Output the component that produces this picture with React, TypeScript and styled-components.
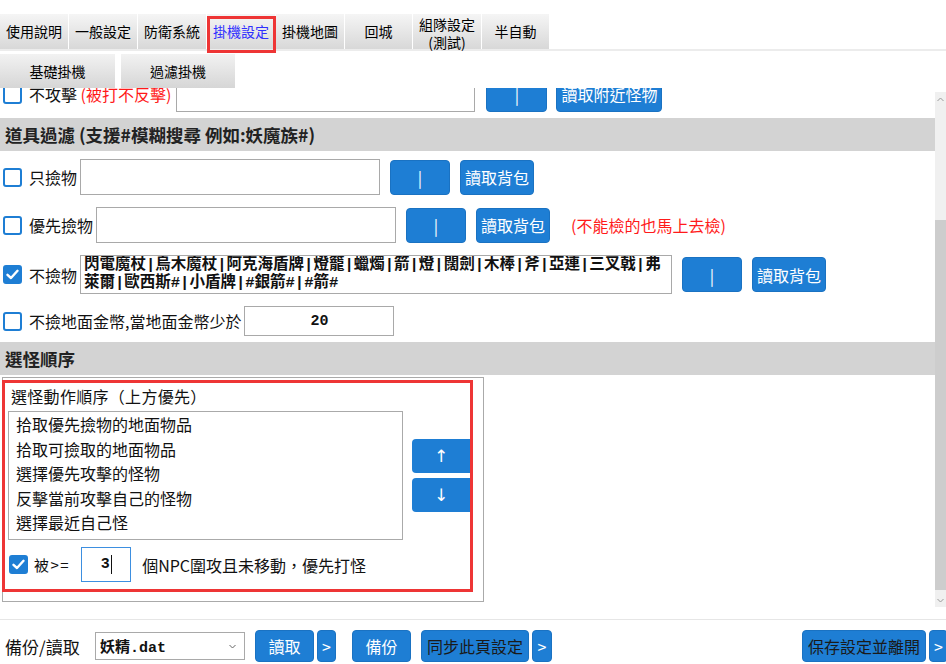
import React from "react";
import styled, { createGlobalStyle, css } from "styled-components";

const BLUE = "#1e7ed4";
const CJK = `"Noto Sans CJK TC", "Noto Sans", sans-serif`;
const MONO = `"Liberation Mono", "Noto Sans CJK TC", monospace`;

const GlobalStyle = createGlobalStyle`
    html, body {
        margin: 0;
        padding: 0;
        background: #fff;
    }
    body {
        font-family: ${CJK};
        color: #111;
    }
    * {
        box-sizing: border-box;
    }
`;

const Page = styled.div`
    width: 946px;
    height: 664px;
    overflow: hidden;
    display: flex;
    flex-direction: column;
`;

/* ---------- top tabs ---------- */

const TabBar = styled.div`
    display: flex;
    gap: 1px;
    margin-top: 14px;
    height: 37px;
    border-bottom: 2px solid #ececec;
`;

const Tab = styled.div<{ $active?: boolean; $twoLine?: boolean }>`
    position: relative;
    height: 35px;
    min-width: 67px;
    padding: ${(p) => (p.$twoLine ? "3px 6px 0" : "0 6px")};
    display: flex;
    align-items: center;
    justify-content: center;
    text-align: center;
    font-size: 14px;
    line-height: ${(p) => (p.$twoLine ? "18px" : "15px")};
    color: ${(p) => (p.$active ? "#2f2fff" : "#000")};
    background: linear-gradient(#f5f5f5, #d8d8d8);
    white-space: nowrap;
    ${(p) =>
        p.$active &&
        css`
            &::after {
                content: "";
                position: absolute;
                left: 0;
                right: -1px;
                top: 2px;
                bottom: -4px;
                border: 3px solid #ee3535;
            }
        `}
`;

const SubTabBar = styled.div`
    display: flex;
    gap: 6px;
    margin-top: 3px;
    height: 34px;
`;

const SubTab = styled.div<{ $w: number }>`
    width: ${(p) => p.$w}px;
    display: flex;
    align-items: center;
    justify-content: center;
    font-size: 14px;
    color: #000;
    background: linear-gradient(#f2f2f2, #d6d6d6);
`;

/* ---------- scrolling body ---------- */

const Body = styled.div`
    display: flex;
    height: 520px;
`;

const Viewport = styled.div`
    flex: 1;
    overflow: hidden;
`;

const Content = styled.div<{ $scroll: number }>`
    margin-top: ${(p) => -p.$scroll}px;
`;

const Scrollbar = styled.div`
    width: 11px;
    margin: 4px 0 1px;
    background: #f0f0f0;
    display: flex;
    flex-direction: column;
`;

const ScrollArrow = styled.div`
    height: 14px;
    display: flex;
    align-items: center;
    justify-content: center;
    flex: none;
`;

const ScrollTrack = styled.div`
    flex: 1;
    display: flex;
    flex-direction: column;
`;

const ScrollThumb = styled.div<{ $top: number; $h: number }>`
    margin-top: ${(p) => p.$top}px;
    height: ${(p) => p.$h}px;
    background: #cdcdcd;
`;

const SectionTitle = styled.div`
    height: 33px;
    margin-bottom: 2px;
    padding-left: 5px;
    display: flex;
    align-items: center;
    background: #d3d3d3;
    font-size: 17.5px;
    font-weight: 700;
    color: #222;
`;

const FilterRow = styled.div`
    display: flex;
    align-items: center;
    padding: 6px 0 6px 3px;
`;

const Box = styled.span<{ $on?: boolean }>`
    width: 19px;
    height: 19px;
    flex: none;
    border-radius: 3px;
    border: 2px solid ${BLUE};
    background: ${(p) => (p.$on ? BLUE : "#fff")};
    display: inline-flex;
    align-items: center;
    justify-content: center;
`;

const Label = styled.span`
    margin-left: 7px;
    font-size: 16px;
    line-height: 22px;
    white-space: nowrap;
`;

const Warn = styled.span<{ $ml?: number }>`
    margin-left: ${(p) => p.$ml ?? 0}px;
    color: #ff1a1a;
    font-size: 16px;
    white-space: nowrap;
`;

const TextInput = styled.input<{ $w: number; $h: number; $ml?: number }>`
    width: ${(p) => p.$w}px;
    height: ${(p) => p.$h}px;
    margin: 0 0 0 ${(p) => p.$ml ?? 3}px;
    padding: 0 4px;
    border: 1px solid #a9a9a9;
    background: #fff;
    font: 700 15px ${MONO};
    color: #111;
    text-align: center;
    outline: none;
`;

const ItemArea = styled.textarea`
    width: 592px;
    height: 39px;
    margin: 0 0 0 3px;
    padding: 0 3px;
    border: 1px solid #a9a9a9;
    resize: none;
    overflow: hidden;
    font: 700 15.5px/18px ${MONO};
    color: #111;
    outline: none;
`;

const BlueButton = styled.button<{ $w: number; $h?: number; $ml?: number; $dark?: boolean }>`
    width: ${(p) => p.$w}px;
    height: ${(p) => p.$h ?? 35}px;
    margin: 0 0 0 ${(p) => p.$ml ?? 10}px;
    padding: 0;
    flex: none;
    border: 1px solid #1a72c2;
    border-radius: 4px;
    background: ${BLUE};
    color: ${(p) => (p.$dark ? "#1a1a1a" : "#fff")};
    font: 16px/1 ${CJK};
    white-space: nowrap;
`;

/* ---------- target order panel ---------- */

const OrderFieldset = styled.div`
    width: 482px;
    margin-left: 2px;
    padding: 2px 10px 9px 0;
    border: 1px solid #aaa;
`;

const OrderPanel = styled.div`
    margin-left: -1px;
    width: 471px;
    border: 3px solid #ee3535;
`;

const OrderLegend = styled.div`
    padding: 2px 0 4px 6px;
    font-size: 16px;
    line-height: 22px;
    letter-spacing: 0.3px;
`;

const OrderBody = styled.div`
    display: flex;
    align-items: center;
    padding-left: 3px;
`;

const OrderList = styled.div`
    width: 395px;
    height: 129px;
    border: 1px solid #aaa;
    padding: 0 7px;
`;

const OrderItem = styled.div`
    font-size: 16px;
    line-height: 24.5px;
    white-space: nowrap;
`;

const MoveButtons = styled.div`
    display: flex;
    flex-direction: column;
    gap: 5px;
    margin-left: 9px;
`;

const MoveButton = styled.button`
    width: 58px;
    height: 34px;
    padding: 0;
    border: none;
    border-radius: 4px 0 0 4px;
    background: ${BLUE};
    color: #fff;
    font: 17px/1 "DejaVu Sans", sans-serif;
`;

const SwarmRow = styled.div`
    display: flex;
    align-items: center;
    margin-top: 7px;
    padding: 0 0 7px 4px;
`;

const SwarmLabel = styled.span`
    margin-left: 6px;
    font-size: 15px;
    letter-spacing: 1.5px;
`;

const CountBox = styled.div`
    width: 50px;
    height: 35px;
    margin-left: 11px;
    border: 1px solid #3d8fe0;
    display: flex;
    align-items: center;
    justify-content: center;
    font: 700 15px ${MONO};
`;

const Caret = styled.span`
    width: 1px;
    height: 19px;
    margin-left: 1px;
    background: #111;
`;

const SwarmText = styled.span`
    margin-left: 11px;
    font-size: 16px;
    white-space: nowrap;
`;

/* ---------- footer ---------- */

const Footer = styled.div`
    margin-top: 11px;
    border-top: 1px solid #e6e6e6;
    padding-top: 10px;
    display: flex;
    align-items: center;
    width: 948px;
`;

const FooterLabel = styled.span`
    width: 95px;
    padding-left: 5px;
    font-size: 17px;
    white-space: nowrap;
`;

const FileSelect = styled.div`
    width: 150px;
    height: 28px;
    border: 1px solid #a9a9a9;
    display: flex;
    align-items: center;
    justify-content: space-between;
    padding: 0 8px 0 4px;
    font: 700 15px ${MONO};
`;

const Spacer = styled.div`
    flex: 1;
`;

const CheckMark = () => (
    <svg width="13" height="11" viewBox="0 0 13 11">
        <path d="M1.5 5.8 L5 9 L11.5 1.8" fill="none" stroke="#fff" strokeWidth="2.4" strokeLinecap="round" strokeLinejoin="round" />
    </svg>
);

const Check: React.FC<{ on?: boolean }> = ({ on }) => <Box $on={on}>{on && <CheckMark />}</Box>;

const Chevron: React.FC<{ up?: boolean; color?: string }> = ({ up, color = "#9a9a9a" }) => (
    <svg width="7" height="5" viewBox="0 0 7 5">
        <path d={up ? "M0.5 4 L3.5 1 L6.5 4" : "M0.5 1 L3.5 4 L6.5 1"} fill="none" stroke={color} strokeWidth="1" />
    </svg>
);

const tabs = ["使用說明", "一般設定", "防衛系統", "掛機設定", "掛機地圖", "回城", "組隊設定\n(測試)", "半自動"];

const orderItems = [
    "拾取優先撿物的地面物品",
    "拾取可撿取的地面物品",
    "選擇優先攻擊的怪物",
    "反擊當前攻擊自己的怪物",
    "選擇最近自己怪",
];

const skipItems =
    "閃電魔杖|烏木魔杖|阿克海盾牌|燈籠|蠟燭|箭|燈|闊劍|木棒|斧|亞連|三叉戟|弗\n萊爾|歐西斯#|小盾牌|#銀箭#|#箭#";

const App: React.FC = () => {
    return (
        <Page>
            <GlobalStyle />
            <TabBar>
                {tabs.map((t) => {
                    const lines = t.split("\n");
                    return (
                        <Tab key={t} $active={t === "掛機設定"} $twoLine={lines.length > 1}>
                            {lines.map((line, i) => (
                                <React.Fragment key={line}>
                                    {i > 0 && <br />}
                                    {line}
                                </React.Fragment>
                            ))}
                        </Tab>
                    );
                })}
            </TabBar>
            <SubTabBar>
                <SubTab $w={115}>基礎掛機</SubTab>
                <SubTab $w={114}>過濾掛機</SubTab>
            </SubTabBar>

            <Body>
                <Viewport>
                    <Content $scroll={18}>
                        <FilterRow>
                            <Check />
                            <Label>
                                不攻擊 <Warn>(被打不反擊)</Warn>
                            </Label>
                            <TextInput $w={299} $h={36} $ml={5} readOnly value="" />
                            <BlueButton $w={61} $ml={11}>|</BlueButton>
                            <BlueButton $w={106} $ml={9}>讀取附近怪物</BlueButton>
                        </FilterRow>

                        <SectionTitle>道具過濾 (支援#模糊搜尋 例如:妖魔族#)</SectionTitle>
                        <FilterRow>
                            <Check />
                            <Label>只撿物</Label>
                            <TextInput $w={300} $h={36} readOnly value="" />
                            <BlueButton $w={60}>|</BlueButton>
                            <BlueButton $w={74}>讀取背包</BlueButton>
                        </FilterRow>
                        <FilterRow>
                            <Check />
                            <Label>優先撿物</Label>
                            <TextInput $w={300} $h={36} readOnly value="" />
                            <BlueButton $w={60}>|</BlueButton>
                            <BlueButton $w={74}>讀取背包</BlueButton>
                            <Warn $ml={21}>(不能檢的也馬上去檢)</Warn>
                        </FilterRow>
                        <FilterRow>
                            <Check on />
                            <Label>不撿物</Label>
                            <ItemArea wrap="off" readOnly value={skipItems} />
                            <BlueButton $w={60}>|</BlueButton>
                            <BlueButton $w={74}>讀取背包</BlueButton>
                        </FilterRow>
                        <FilterRow>
                            <Check />
                            <Label>不撿地面金幣,當地面金幣少於</Label>
                            <TextInput $w={150} $h={30} readOnly value="20" />
                        </FilterRow>

                        <SectionTitle>選怪順序</SectionTitle>
                        <OrderFieldset>
                            <OrderPanel>
                                <OrderLegend>選怪動作順序（上方優先）</OrderLegend>
                                <OrderBody>
                                    <OrderList>
                                        {orderItems.map((it) => (
                                            <OrderItem key={it}>{it}</OrderItem>
                                        ))}
                                    </OrderList>
                                    <MoveButtons>
                                        <MoveButton>↑</MoveButton>
                                        <MoveButton>↓</MoveButton>
                                    </MoveButtons>
                                </OrderBody>
                                <SwarmRow>
                                    <Check on />
                                    <SwarmLabel>被&gt;=</SwarmLabel>
                                    <CountBox>
                                        3<Caret />
                                    </CountBox>
                                    <SwarmText>個NPC圍攻且未移動，優先打怪</SwarmText>
                                </SwarmRow>
                            </OrderPanel>
                        </OrderFieldset>
                    </Content>
                </Viewport>
                <Scrollbar>
                    <ScrollArrow>
                        <Chevron up />
                    </ScrollArrow>
                    <ScrollTrack>
                        <ScrollThumb $top={114} $h={370} />
                    </ScrollTrack>
                    <ScrollArrow>
                        <Chevron />
                    </ScrollArrow>
                </Scrollbar>
            </Body>

            <Footer>
                <FooterLabel>備份/讀取</FooterLabel>
                <FileSelect>
                    妖精.dat
                    <Chevron color="#666" />
                </FileSelect>
                <BlueButton $w={59} $h={32}>讀取</BlueButton>
                <BlueButton $w={19} $h={32} $ml={3}>&gt;</BlueButton>
                <BlueButton $w={59} $h={32} $ml={16}>備份</BlueButton>
                <BlueButton $w={108} $h={32} $dark>同步此頁設定</BlueButton>
                <BlueButton $w={20} $h={32} $ml={3}>&gt;</BlueButton>
                <Spacer />
                <BlueButton $w={124} $h={32} $dark>保存設定並離開</BlueButton>
                <BlueButton $w={19} $h={32} $ml={3}>&gt;</BlueButton>
            </Footer>
        </Page>
    );
};

export default App;
